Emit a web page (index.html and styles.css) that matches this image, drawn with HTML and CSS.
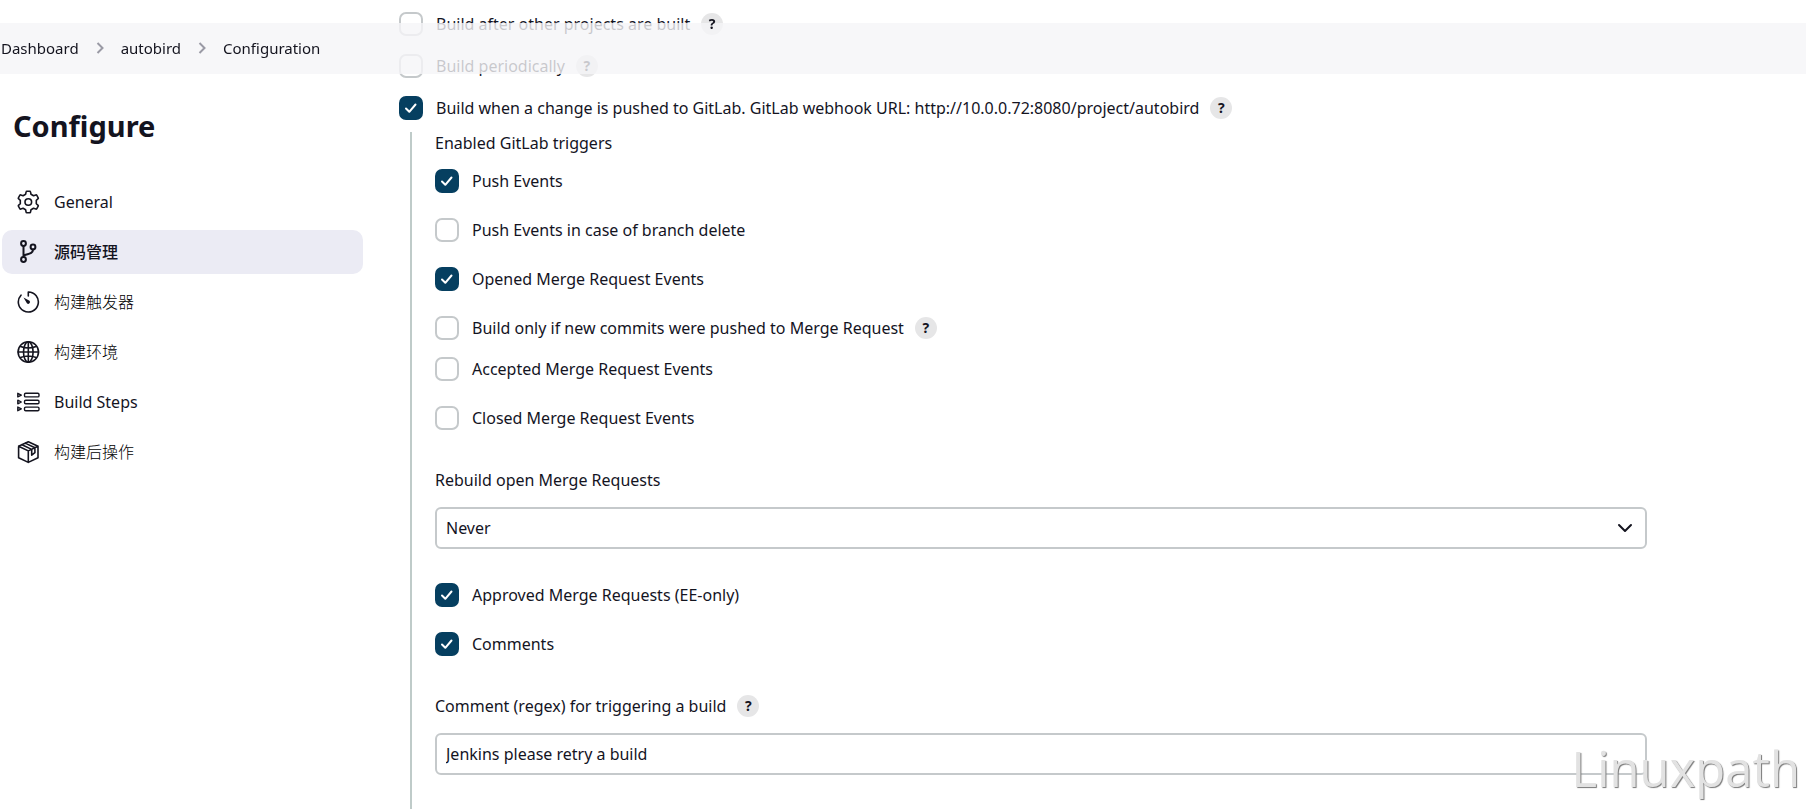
FILE: index.html
```html
<!DOCTYPE html>
<html lang="en">
<head>
<meta charset="utf-8">
<title>autobird Config</title>
<link rel="stylesheet" href="styles.css">
</head>
<body>
<nav class="breadcrumbs" aria-label="Breadcrumb">
  <a href="#dashboard">Dashboard</a>
  <svg class="sep" viewBox="0 0 8 12"><path d="M1.5 1l5 5-5 5"/></svg>
  <a href="#autobird">autobird</a>
  <svg class="sep" viewBox="0 0 8 12"><path d="M1.5 1l5 5-5 5"/></svg>
  <a href="#configuration">Configuration</a>
</nav>
<div class="page">
  <aside class="side">
    <h1 class="title">Configure</h1>
    <nav class="tasks" aria-label="Sections">
      <a class="task" href="#general">
        <svg class="icon" viewBox="0 0 24 24"><circle cx="12.300" cy="12" r="3.300"/><path d="M10.800 1.300h3q.6 0 .7.600l.5 2.400 2.500 1.400 2.300-.8q.6-.2.900.3l1.500 2.600q.3.500-.1.900L20.300 10.300v3.400l1.800 1.600q.4.400.1.900l-1.500 2.600q-.3.500-.9.300l-2.300-.8-2.500 1.400-.5 2.400q-.1.600-.7.600h-3q-.6 0-.7-.6l-.5-2.400-2.500-1.400-2.300.8q-.6.200-.9-.3l-1.500-2.600q-.3-.5.100-.9l1.800-1.600v-3.400L2.500 8.700q-.4-.4-.1-.9l1.500-2.600q.3-.5.900-.3l2.300.8 2.500-1.400.5-2.400q.1-.6.700-.6z"/></svg>
        General</a>
      <a class="task task-active" href="#scm">
        <svg class="icon icon-heavy" viewBox="0 0 24 24"><circle cx="7.500" cy="3.500" r="2.400"/><circle cx="7.500" cy="19.500" r="2.400"/><circle cx="17" cy="7" r="2.400"/><path d="M7.500 5.900v11.200M17 9.400c0 4.400-4.500 4.400-9.500 6.100"/></svg>
        源码管理</a>
      <a class="task task-light" href="#triggers">
        <svg class="icon" viewBox="0 0 24 24"><path d="M12.300 6V2A10 10 0 1 1 5 5.200"/><path class="solid" d="M7.500 7.500l6 3.300a1.800 1.800 0 0 1-2.600 2.500z"/></svg>
        构建触发器</a>
      <a class="task task-light" href="#environment">
        <svg class="icon" viewBox="0 0 24 24"><circle cx="12.300" cy="12" r="10.200"/><ellipse cx="12.300" cy="12" rx="4.800" ry="10.200"/><path d="M12.300 1.800v20.400M2.100 12h20.400M4.500 6.500c4.500 1.800 11 1.800 15.600 0M4.500 17.500c4.500-1.800 11-1.800 15.600 0"/></svg>
        构建环境</a>
      <a class="task" href="#steps">
        <svg class="icon icon-fine" viewBox="0 0 24 24"><rect x="8.500" y="3.300" width="14.500" height="3.600" rx="1.200"/><rect x="8.500" y="10.200" width="14.500" height="3.600" rx="1.200"/><rect x="8.500" y="17.100" width="14.500" height="3.600" rx="1.200"/><path d="M1.800 3.300v3.600l3.500-1.800zM1.800 10.200v3.600l3.500-1.800zM1.800 17.100v3.600l3.500-1.800z"/></svg>
        Build Steps</a>
      <a class="task task-light" href="#post">
        <svg class="icon" viewBox="0 0 24 24"><path d="M12.300 1.700l9.700 4.500v11.600l-9.700 4.600-9.700-4.600V6.200zM2.600 6.200l9.700 4.700L22 6.200M12.300 10.900v11.500M6 4.700l9.700 4.700v5.800l3.200-2.500V7.700L9.200 3.100"/></svg>
        构建后操作</a>
    </nav>
  </aside>
  <main class="main">
    <div class="row row-top">
      <input class="check" type="checkbox" id="after"><label for="after">Build after other projects are built</label>
      <button class="help" type="button" aria-label="Help"><span class="help-mark help-raised">?</span></button>
    </div>
    <div class="row row-top">
      <input class="check" type="checkbox" id="periodic"><label for="periodic">Build periodically</label>
      <button class="help" type="button" aria-label="Help"><span class="help-mark">?</span></button>
    </div>
    <div class="row row-top">
      <input class="check" type="checkbox" id="gitlab" checked><label for="gitlab">Build when a change is pushed to GitLab. GitLab webhook URL: http://10.0.0.72:8080/project/autobird</label>
      <button class="help" type="button" aria-label="Help"><span class="help-mark">?</span></button>
    </div>
    <div class="nested">
      <div class="field-title">Enabled GitLab triggers</div>
      <div class="group group-first">
        <div class="row"><input class="check" type="checkbox" id="push" checked><label for="push">Push Events</label></div>
        <div class="row"><input class="check" type="checkbox" id="pushdel"><label for="pushdel">Push Events in case of branch delete</label></div>
        <div class="row"><input class="check" type="checkbox" id="opened" checked><label for="opened">Opened Merge Request Events</label></div>
        <div class="row row-tight"><input class="check" type="checkbox" id="newcommits"><label for="newcommits">Build only if new commits were pushed to Merge Request</label>
          <button class="help" type="button" aria-label="Help"><span class="help-mark">?</span></button></div>
        <div class="row"><input class="check" type="checkbox" id="accepted"><label for="accepted">Accepted Merge Request Events</label></div>
        <div class="row"><input class="check" type="checkbox" id="closed"><label for="closed">Closed Merge Request Events</label></div>
      </div>
      <label class="field-title" for="rebuild">Rebuild open Merge Requests</label>
      <div class="select-wrap">
        <select class="control" id="rebuild"><option>Never</option></select>
        <svg class="caret" viewBox="0 0 16 10"><path d="M2 2l6 6 6-6"/></svg>
      </div>
      <div class="group group-second">
        <div class="row"><input class="check" type="checkbox" id="approved" checked><label for="approved">Approved Merge Requests (EE-only)</label></div>
        <div class="row"><input class="check" type="checkbox" id="comments" checked><label for="comments">Comments</label></div>
      </div>
      <div class="field-title"><label for="regex">Comment (regex) for triggering a build</label>
        <button class="help" type="button" aria-label="Help"><span class="help-mark">?</span></button></div>
      <input class="control" id="regex" type="text" value="Jenkins please retry a build">
    </div>
  </main>
</div>
<div class="watermark">Linuxpath</div>
</body>
</html>
```
FILE: styles.css
```css
* { box-sizing: border-box; }
body {
  margin: 0;
  background: #fff;
  color: #14141f;
  font: 16px/22px "Noto Sans", "Noto Sans CJK SC", sans-serif;
  overflow: hidden;
}
a { color: inherit; text-decoration: none; }
.breadcrumbs {
  position: fixed;
  z-index: 2;
  top: 23px;
  left: 0;
  right: 0;
  height: 51px;
  display: flex;
  align-items: center;
  gap: 17px;
  padding: 0 1px 2px;
  background: rgba(245, 245, 248, 0.8);
  font-size: 15px;
}
.sep { width: 8px; height: 12px; fill: none; stroke: #9a9aa5; stroke-width: 2; }
.page {
  display: grid;
  grid-template-columns: 363px 1fr;
  column-gap: 36px;
  min-height: 100vh;
  padding-right: 159px;
}
.side { padding: 106px 0 0 2px; }
.title { margin: 0 0 34px; padding-left: 11px; font-size: 29px; line-height: 40px; font-weight: 700; }
.tasks { display: flex; flex-direction: column; gap: 6px; }
.task { display: flex; align-items: center; gap: 14px; height: 44px; padding: 0 14px; border-radius: 10px; }
.task-active { background: #ebebf4; font-weight: 500; }
.task-light { font-weight: 300; color: #000; }
.icon { width: 24px; height: 24px; fill: none; stroke: #14141f; stroke-width: 1.6; stroke-linejoin: round; stroke-linecap: round; }
.icon-heavy { stroke-width: 2; }
.icon-fine { stroke-width: 1.4; }
.solid { fill: #14141f; stroke: none; }
.main { display: flex; flex-direction: column; padding-top: 3px; }
.row { display: flex; align-items: center; height: 25px; margin-bottom: 24px; }
.row-tight { margin-bottom: 16px; }
.row-top { height: 42px; margin-bottom: 0; }
.row:last-child { margin-bottom: 0; }
.check {
  appearance: none;
  flex: none;
  width: 24px;
  height: 24px;
  margin: 0 13px 0 0;
  border: 2px solid #c5c9cb;
  border-radius: 7px;
  background: #fff;
}
.check:checked {
  border-color: #063f60;
  background: #063f60 url("data:image/svg+xml,%3Csvg xmlns='http://www.w3.org/2000/svg' viewBox='0 0 20 20'%3E%3Cpath d='M5 10.500l3.300 3.300L14.500 6.500' fill='none' stroke='white' stroke-width='2' stroke-linecap='round' stroke-linejoin='round'/%3E%3C/svg%3E") center / 20px 20px no-repeat;
}
.help {
  flex: none;
  width: 22px;
  height: 22px;
  margin: 0 0 0 11px;
  padding: 0;
  border: 0;
  border-radius: 50%;
  background: #e6e6e7;
  color: #14141f;
  font: 700 14px/22px "Noto Sans", sans-serif;
}
.help-raised { position: relative; z-index: 3; }
.nested {
  flex: 1;
  margin: 3px 0 0 11px;
  padding-left: 23px;
  border-left: 2px solid #bfcbc9;
}
.field-title { display: flex; align-items: center; height: 22px; }
.group-first { margin: 14px 0 39px; }
.group-second { margin: 33px 0 39px; }
.control {
  appearance: none;
  display: block;
  width: 100%;
  height: 42px;
  margin: 16px 0 0;
  padding: 0 9px;
  border: 2px solid #c5c9cb;
  border-radius: 6px;
  background: #fff;
  color: inherit;
  font: inherit;
}
.select-wrap { position: relative; }
.caret { position: absolute; right: 14px; top: 16px; width: 16px; height: 10px; fill: none; stroke: #14141f; stroke-width: 2; stroke-linecap: round; stroke-linejoin: round; pointer-events: none; }
.watermark {
  position: fixed;
  z-index: 4;
  right: 6px;
  bottom: 11px;
  color: #e2e2e2;
  font: 400 49px/60px "Open Sans", sans-serif;
  text-shadow: 1px 1px 1px #777;
  pointer-events: none;
}
```
